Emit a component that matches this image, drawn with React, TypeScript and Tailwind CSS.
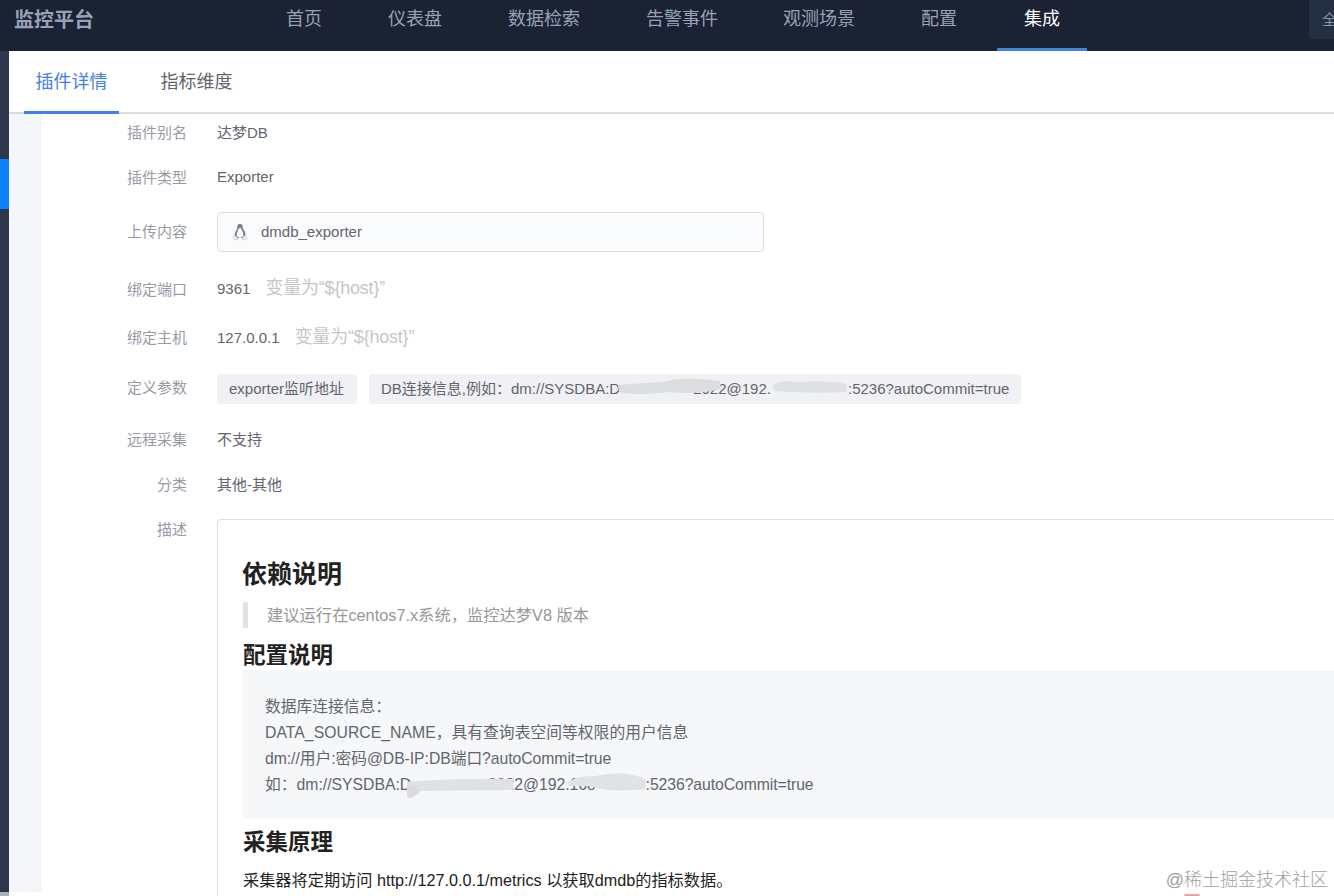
import type { ReactNode } from 'react';
import clsx from 'clsx';

const NAV_ITEMS = [
  { label: '首页', className: 'w-[90px]' },
  { label: '仪表盘', className: 'w-[90px] ml-[21px]' },
  { label: '数据检索', className: 'w-[126px] ml-[21px]' },
  { label: '告警事件', className: 'w-[126px] ml-[12px]' },
  { label: '观测场景', className: 'w-[126px] ml-[11px]' },
  { label: '配置', className: 'w-[90px] ml-[12px]' },
  { label: '集成', className: 'w-[90px] ml-[13px]', active: true },
];

function LinuxIcon() {
  return (
    <svg width="16" height="18" viewBox="0 0 16 18" fill="none">
      <path
        d="M5.3 4.3C5.1 2.2 6.1 1 8 1s2.8 1.2 2.6 3c0 2 2.8 4 2.9 7.3 0 1.7-.8 3.2-2 3.8H4.6c-1.4-.7-2.1-2-1.9-3.8.3-3 2.7-4.6 2.6-7Z"
        fill="#777b80"
      />
      <path d="M6.5 5.6h2.8c.4 2 2.1 3.4 2.1 6 0 2-1.4 3.2-3.4 3.2s-3.4-1.2-3.4-3.2c0-2.3 1.7-3.8 1.9-6Z" fill="#fafbfd" />
      <path d="M6.5 4.8 8 4.2l1.6.6L8 6Z" fill="#b9bbb9" />
      <path d="m1 15.6.7-2.6 1.7-.3 2.7 3.1-.8 1.2Zm14 0-.9-2.6-1.7-.3-2.4 3.1.7 1.2Z" fill="#f4f4f2" stroke="#bcc0c2" strokeWidth=".7" />
    </svg>
  );
}

interface SmudgeProps {
  className: string;
  width: number;
  text?: string;
  children: ReactNode;
}

// Brush stroke that hides part of a connection string
function Smudge({ className, width, text, children }: SmudgeProps) {
  return (
    <span className={clsx('relative flex h-4 shrink-0 items-center', className)}>
      {text}
      <svg className="absolute -left-1 -top-1" width={width} height="26" viewBox={`0 0 ${width} 26`}>
        {children}
      </svg>
    </span>
  );
}

interface RowProps {
  label: string;
  className: string;
  labelClassName?: string;
  children: ReactNode;
}

function Row({ label, className, labelClassName, children }: RowProps) {
  return (
    <div className={clsx('flex items-center', className)}>
      <span className={clsx('w-[145px] shrink-0 text-right text-[#979ba5]', labelClassName)}>{label}</span>
      <div className="ml-[30px] flex min-w-0 flex-1 items-center">{children}</div>
    </div>
  );
}

function Hint() {
  return <span className="-mt-0.5 ml-[15px] text-[18px] tracking-[-0.2px] text-[#c4c6cc]">变量为“$&#123;host&#125;”</span>;
}

function Header() {
  return (
    <header className="flex h-[51px] shrink-0 bg-[#1a2233]">
      <div className="w-[259px] shrink-0 pl-[14px] text-[20px] font-bold leading-[40px] text-[#96a2b9]">监控平台</div>
      <nav className="flex flex-1">
        {NAV_ITEMS.map((item) => (
          <div
            key={item.label}
            className={clsx(
              'shrink-0 border-b-[3px] text-center text-[18px] leading-[38px]',
              item.className,
              item.active ? 'border-[#437fe8] text-white' : 'border-transparent text-[#96a2b9]'
            )}
          >
            {item.label}
          </div>
        ))}
      </nav>
      <div className="h-[39px] w-[25px] shrink-0 overflow-hidden whitespace-nowrap rounded-bl-sm bg-[#252f43] pl-[13px] text-[15px] leading-[40px] text-[#8793aa]">
        全
      </div>
    </header>
  );
}

function Description() {
  return (
    <div className="h-[400px] flex-1 rounded-tl-sm border-l border-t border-[#dcdee5] pl-[25px] pt-[36px] text-[16px] text-[#222]">
      <h1 className="-ml-px text-[25px] font-bold leading-[36px]">依赖说明</h1>
      <blockquote className="mt-[10px] h-[26px] border-l-[5px] border-[#e3e3e3] pl-[19px] text-[16.3px] leading-[27px] text-[#979797]">
        建议运行在centos7.x系统，监控达梦V8 版本
      </blockquote>
      <h2 className="mt-[14px] text-[22.5px] font-bold leading-[28px]">配置说明</h2>
      <div className="h-[149px] whitespace-nowrap bg-[#f5f7f9] pl-[22px] pt-[24px] text-[15.75px] leading-[26px] text-[#63656e]">
        <p>数据库连接信息：</p>
        <p className="tracking-[0.04px]">DATA_SOURCE_NAME，具有查询表空间等权限的用户信息</p>
        <p className="tracking-[-0.05px]">dm://用户:密码@DB-IP:DB端口?autoCommit=true</p>
        <p className="flex items-center">
          <span>如：dm://SYSDBA:D</span>
          <Smudge className="w-[103px] justify-end" width={112} text="202">
            <path d="M-1 9 Q50 5 106 6 L106 17 L8 18 Q5 25 -3 21 Z" fill="#dfe1e3" />
            <path d="M0 16Q6 10 12 15Q15 19 9 22Q4 27 0 24Z" fill="#d9dbdd" />
          </Smudge>
          <span>2@192.</span>
          <Smudge className="w-[76px]" width={84} text="168">
            <path d="M1 9Q13 2 30 3Q62-4 80 7L79 16Q40 20 24 13L3 13Z" fill="#e0e2e4" />
          </Smudge>
          <span className="tracking-[-0.07px]">:5236?autoCommit=true</span>
        </p>
      </div>
      <h2 className="mt-[8px] text-[22.5px] font-bold leading-[31px]">采集原理</h2>
      <p className="mt-[9px] text-[16.2px] leading-[26px]">采集器将定期访问 http://127.0.0.1/metrics 以获取dmdb的指标数据。</p>
    </div>
  );
}

export default function App() {
  return (
    <div className="relative flex h-[896px] w-[1334px] flex-col overflow-hidden bg-white font-['Liberation_Sans','Noto_Sans_CJK_SC',sans-serif]">
      <Header />
      <div className="flex min-h-0 flex-1">
        <aside className="flex w-[9px] shrink-0 flex-col bg-[#2d374c]">
          <div className="mt-[108px] h-[50px] bg-[#0b84ff]" />
          <div className="mt-auto h-1 bg-[#a9b2bc]" />
        </aside>
        <main className="flex min-w-0 flex-1 flex-col">
          <div className="flex h-[63px] shrink-0 border-b-2 border-[#dcdcdc] pl-[15px] text-[18px] leading-[63px]">
            <div className="-mb-0.5 h-[63px] w-[95px] border-b-[3px] border-[#437fe8] text-center text-[#437fe8]">插件详情</div>
            <div className="ml-[30px] w-[95px] text-center text-[#63656e]">指标维度</div>
          </div>
          <div className="flex min-h-0 flex-1">
            <div className="mb-1 w-[33px] shrink-0 bg-[#f5f6fa]" />
            <div className="min-w-0 flex-1 text-[15px] text-[#63656e]">
              <Row label="插件别名" className="h-[37px] pt-0.5">达梦DB</Row>
              <Row label="插件类型" className="h-[52px]" labelClassName="pt-0.5">Exporter</Row>
              <Row label="上传内容" className="h-[58px]">
                <div className="flex h-[40px] w-[547px] items-center rounded-sm border border-[#dcdee5] bg-[#fafbfd] pl-[14px]">
                  <LinuxIcon />
                  <span className="ml-[13px]">dmdb_exporter</span>
                </div>
              </Row>
              <Row label="绑定端口" className="h-[56px]" labelClassName="pt-0.5">
                9361
                <Hint />
              </Row>
              <Row label="绑定主机" className="h-[42px]">
                127.0.0.1
                <Hint />
              </Row>
              <Row label="定义参数" className="h-[60px]" labelClassName="pb-0.5">
                <span className="flex h-[30px] w-[140px] items-center rounded-sm bg-[#f0f1f4] pl-3">exporter监听地址</span>
                <span className="ml-3 flex h-[30px] w-[652px] items-center whitespace-nowrap rounded-sm bg-[#f0f1f4] pl-3">
                  DB连接信息,例如：dm://SYSDBA:D
                  <Smudge className="w-[98px] justify-end" width={110} text="202">
                    <path d="M2 8Q30 6 48 5Q65-1 104 4L105 12Q80 18 52 15Q20 19 3 15Z" fill="#dcdddf" />
                  </Smudge>
                  2@192.
                  <Smudge className="w-[77px]" width={90}>
                    <path d="M5 9Q15 2 31 5Q60 3 79 7L80 15Q43 17 8 14Z" fill="#dfe0e2" />
                  </Smudge>
                  :5236?autoCommit=true
                </span>
              </Row>
              <Row label="远程采集" className="h-[40px] pt-0.5">不支持</Row>
              <Row label="分类" className="h-[50px] pt-0.5">其他-其他</Row>
              <div className="flex pt-[10px]">
                <span className="w-[145px] shrink-0 text-right leading-[22px] text-[#979ba5]">描述</span>
                <div className="ml-[30px] flex min-w-0 flex-1">
                  <Description />
                </div>
              </div>
            </div>
          </div>
        </main>
      </div>
      <div className="absolute bottom-[2px] right-[6px] whitespace-nowrap text-[18px] font-light text-[#a0a0a0]">
        @稀土掘金技术社区
      </div>
      <div className="absolute bottom-0 right-[134px] h-[2px] w-4 rounded-t-sm bg-[#f0a09a]" />
    </div>
  );
}
